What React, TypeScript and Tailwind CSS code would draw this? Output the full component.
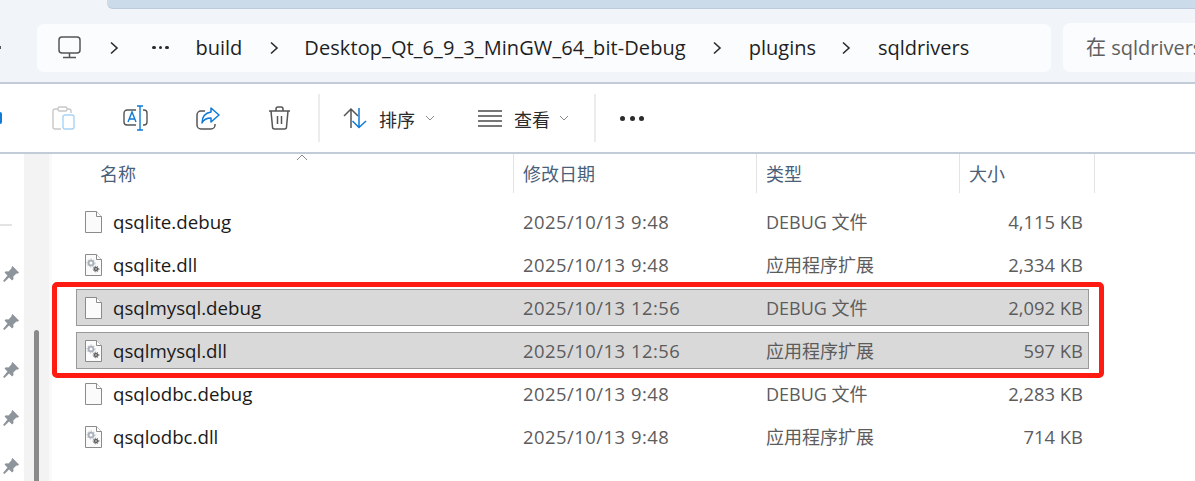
const FONT = "font-['Open_Sans','Noto_Sans_CJK_SC',sans-serif]";

const files = [
  { name: "qsqlite.debug", date: "2025/10/13 9:48", type: "DEBUG 文件", size: "4,115 KB", dll: false, selected: false },
  { name: "qsqlite.dll", date: "2025/10/13 9:48", type: "应用程序扩展", size: "2,334 KB", dll: true, selected: false },
  { name: "qsqlmysql.debug", date: "2025/10/13 12:56", type: "DEBUG 文件", size: "2,092 KB", dll: false, selected: true },
  { name: "qsqlmysql.dll", date: "2025/10/13 12:56", type: "应用程序扩展", size: "597 KB", dll: true, selected: true },
  { name: "qsqlodbc.debug", date: "2025/10/13 9:48", type: "DEBUG 文件", size: "2,283 KB", dll: false, selected: false },
  { name: "qsqlodbc.dll", date: "2025/10/13 9:48", type: "应用程序扩展", size: "714 KB", dll: true, selected: false },
];

function Chevron() {
  return (
    <svg width="10" height="14" viewBox="0 0 10 14" fill="none" stroke="#2b2b2b" strokeWidth="1.6" className="shrink-0">
      <path d="M2 1.500 8 7l-6 5.500" />
    </svg>
  );
}

function SmallChevron() {
  return (
    <svg width="10" height="6" viewBox="0 0 10 6" fill="none" stroke="#8a8a8a" strokeWidth="1" className="shrink-0">
      <path d="M1 1l4 4 4-4" />
    </svg>
  );
}

function Pin() {
  return (
    <svg width="18" height="18" viewBox="0 0 18 18" fill="#8d949c">
      <path d="M10.500 1 17 7.400l-1.400 1.300-1.100-.3-3.200 3.100.2 2.600-1.400 1.300-3-3L2.400 17 1 15.900l4.500-5.300-3-3 1.400-1.300 2.600.2 3.100-3.200-.1-1.100z" />
    </svg>
  );
}

function FileIcon({ dll }: { dll: boolean }) {
  return (
    <svg width="17" height="22" viewBox="0 0 17 22" fill="none" className="mt-[1px] shrink-0">
      <path d="M.5.5h11l5 5v16H.5z" fill="#fbfbfb" stroke="#8b8b8b" />
      <path d="M11.500.5v5h5" fill="#fff" stroke="#8b8b8b" />
      {dll ? (
        <g>
          <circle cx="6" cy="9" r="2.400" stroke="#a9b0ba" strokeWidth="1.800" />
          <circle cx="6" cy="9" r="3.900" stroke="#a9b0ba" strokeWidth="1" strokeDasharray="1.500 1.400" />
          <circle cx="11" cy="15" r="1.500" stroke="#5c5f63" strokeWidth="1.500" />
          <circle cx="11" cy="15" r="2.800" stroke="#5c5f63" strokeWidth="1" strokeDasharray="1.200 1.100" />
        </g>
      ) : null}
    </svg>
  );
}

function FileRow({ file }: { file: (typeof files)[number] }) {
  return (
    <div className="h-[43px] py-[3px]">
      <div
        className={`grid h-full grid-cols-[438px_243px_1fr_auto] items-center border pl-[8px] pr-[5px] ${
          file.selected ? "border-[#999999] bg-[#d9d9d9]" : "border-transparent"
        }`}
      >
        <div className="flex items-center gap-[11px] text-[18.7px] text-[#1a1a1a]">
          <FileIcon dll={file.dll} />
          <span className="pt-[2px]">{file.name}</span>
        </div>
        <span className="text-[18.4px] tracking-[0.5px] text-[#5c5c5c]">{file.date}</span>
        <span className="pt-[2px] text-[18px] text-[#5c5c5c]">{file.type}</span>
        <span className="text-[18.4px] text-[#5c5c5c]">{file.size}</span>
      </div>
    </div>
  );
}

function HeaderCell({ label, width }: { label: string; width: string }) {
  return (
    <div className={`${width} flex h-full shrink-0 items-center border-r border-[#e3e3e3] pl-[9px] pt-[2px] text-[18px] text-[#4a5f7a]`}>
      {label}
    </div>
  );
}

function AddressBar() {
  return (
    <div className="flex h-[48px] w-[1014px] shrink-0 items-center rounded-[7px] bg-[#fbfcfe] pl-[21px] text-[20px] text-[#1f1f1f]">
      <svg width="23" height="23" viewBox="0 0 23 23" fill="none" stroke="#555" strokeWidth="1.500" className="shrink-0">
        <rect x="1" y="1" width="21" height="16" rx="3" />
        <path d="M11.500 17v4M5 21.500h13" />
      </svg>
      <div className="ml-[28px]"><Chevron /></div>
      <span className="ml-[33px] flex gap-[3px]">
        <i className="size-[3.500px] rounded-full bg-[#2b2b2b]" />
        <i className="size-[3.500px] rounded-full bg-[#2b2b2b]" />
        <i className="size-[3.500px] rounded-full bg-[#2b2b2b]" />
      </span>
      <span className="ml-[27px]">build</span>
      <div className="ml-[27px]"><Chevron /></div>
      <span className="ml-[25px] tracking-[0.08px]">Desktop_Qt_6_9_3_MinGW_64_bit-Debug</span>
      <div className="ml-[26px]"><Chevron /></div>
      <span className="ml-[27px]">plugins</span>
      <div className="ml-[25px]"><Chevron /></div>
      <span className="ml-[27px]">sqldrivers</span>
    </div>
  );
}

function Toolbar() {
  return (
    <div className="flex h-[68px] items-center bg-white text-[#2b2b2b]">
      <div className="h-[12px] w-[2px] shrink-0 rounded-r-[2px] bg-[#0f7ad8]" />
      <svg width="23" height="24" viewBox="0 0 23 24" fill="none" strokeWidth="1.400" className="ml-[50px] shrink-0">
        <path d="M6 3H3a2 2 0 0 0-2 2v16a2 2 0 0 0 2 2h6" stroke="#c8c8c8" />
        <path d="M15 3h2a2 2 0 0 1 2 2v2" stroke="#c8c8c8" />
        <rect x="6" y="1" width="9" height="4" rx="1.500" stroke="#c8c8c8" />
        <rect x="11" y="9" width="11" height="14" rx="2" stroke="#a9d3f5" />
      </svg>
      <svg width="25" height="26" viewBox="0 0 25 26" fill="none" strokeWidth="1.400" className="ml-[48px] shrink-0">
        <path d="M13 5H4a3 3 0 0 0-3 3v9a3 3 0 0 0 3 3h9" stroke="#555" />
        <path d="M20 5h1a3 3 0 0 1 3 3v9a3 3 0 0 1-3 3h-1" stroke="#555" />
        <path d="M14 1h6M14 25h6M17 1v24" stroke="#0f7ad8" />
        <path d="M5 17l4-10 4 10M6.500 14h5" stroke="#0f7ad8" />
      </svg>
      <svg width="24" height="23" viewBox="0 0 24 23" fill="none" strokeWidth="1.500" className="ml-[48px] shrink-0">
        <path d="M9 4H5a4 4 0 0 0-4 4v10a4 4 0 0 0 4 4h10a4 4 0 0 0 4-4v-1" stroke="#555" />
        <path d="M15 1l8 7-8 7v-4c-4 0-7 1-9 5 0-6 3-10 9-11z" stroke="#0f7ad8" strokeLinejoin="round" />
      </svg>
      <svg width="23" height="24" viewBox="0 0 23 24" fill="none" stroke="#555" strokeWidth="1.500" className="ml-[48px] shrink-0">
        <path d="M1 5h21M8 4.500V3a2 2 0 0 1 2-2h3a2 2 0 0 1 2 2v1.500M3 5l1.500 16a2 2 0 0 0 2 2h10a2 2 0 0 0 2-2L20 5M9.500 10v8M13.500 10v8" />
      </svg>
      <div className="ml-[27px] h-[48px] w-[2px] bg-[#ececec]" />
      <svg width="25" height="22" viewBox="0 0 25 22" fill="none" strokeWidth="1.500" className="ml-[23px] shrink-0">
        <path d="M8 21V2M1 9l7-7 7 7" stroke="#555" />
        <path d="M16 1v19M9.500 14l6.500 6.500 7-6.500" stroke="#0f7ad8" />
      </svg>
      <span className="ml-[11px] pt-[5px] text-[18px]">排序</span>
      <div className="ml-[10px]"><SmallChevron /></div>
      <div className="ml-[43px] flex w-[24px] flex-col gap-[3px]">
        <i className="h-[2px] bg-[#777]" />
        <i className="h-[2px] bg-[#777]" />
        <i className="h-[2px] bg-[#777]" />
        <i className="h-[2px] bg-[#777]" />
      </div>
      <span className="ml-[12px] pt-[5px] text-[18px]">查看</span>
      <div className="ml-[9px]"><SmallChevron /></div>
      <div className="ml-[25px] h-[48px] w-[2px] bg-[#ececec]" />
      <span className="ml-[24px] flex gap-[4.500px]">
        <i className="size-[5px] rounded-full bg-[#2b2b2b]" />
        <i className="size-[5px] rounded-full bg-[#2b2b2b]" />
        <i className="size-[5px] rounded-full bg-[#2b2b2b]" />
      </span>
    </div>
  );
}

export default function App() {
  return (
    <div className={`${FONT} relative flex h-[481px] w-[1195px] flex-col overflow-hidden bg-white`}>
      {/* title strip and address row */}
      <div className="h-[84px] border-b-2 border-[#c2ccd9] bg-[#f1f4f9]">
        <div className="ml-[107px] h-[9px] rounded-bl-[6px] border-b border-[#bccadb] bg-[#cbdbe9]" />
        <div className="mt-[14px] flex items-center">
          <div className="h-[3px] w-[1px] shrink-0 bg-[#555]" />
          <div className="ml-[36px]"><AddressBar /></div>
          <div className="ml-[12px] flex h-[49px] min-w-0 flex-1 items-center overflow-hidden whitespace-nowrap rounded-l-[7px] bg-[#fbfcfe] pl-[23px] text-[20px] text-[#5f5f5f]">
            在 sqldrivers 中搜索
          </div>
        </div>
      </div>

      <Toolbar />

      <div className="flex min-h-0 flex-1 border-t-2 border-[#c2ccd9]">
        {/* navigation pane, pins and scrollbar */}
        <div className="flex w-[52px] shrink-0">
          <div className="flex w-[24px] flex-col items-start">
            <div className="mt-[70px] h-[2px] w-[12px] bg-[#e3e3e3]" />
            <div className="mt-[39px] flex flex-col items-center gap-[30px] pl-[2px]">
              <Pin />
              <Pin />
              <Pin />
              <Pin />
              <Pin />
            </div>
          </div>
          <div className="flex w-[25px] justify-center bg-[#f3f3f3] pt-[176px]">
            <div className="h-full w-[5px] rounded-t-full bg-[#8a8a8a]" />
          </div>
          <div className="w-[3px] bg-[#f9f9f9]" />
        </div>

        {/* file list */}
        <div className="min-w-0 flex-1 pl-[24px] pr-[106px]">
          <div className="relative flex h-[39px]">
            <div className="flex h-full w-[438px] shrink-0 items-center border-r border-[#e3e3e3] pl-[24px] pt-[2px] text-[18px] text-[#4a5f7a]">名称</div>
            <HeaderCell label="修改日期" width="w-[243px]" />
            <HeaderCell label="类型" width="w-[203px]" />
            <HeaderCell label="大小" width="w-[135px]" />
            <svg width="12" height="7" viewBox="0 0 12 7" fill="none" stroke="#8a8a8a" strokeWidth="1" className="absolute left-[220px] top-0">
              <path d="M1 6l5-5 5 5" />
            </svg>
          </div>
          <div className="pt-[7px]">
            {files.map((file) => (
              <FileRow key={file.name} file={file} />
            ))}
          </div>
        </div>
      </div>

      {/* red annotation drawn over the screenshot */}
      <div className="absolute left-[52px] top-[282px] h-[96px] w-[1052px] rounded-[5px] border-[5px] border-[#ff1a12]" />
    </div>
  );
}
